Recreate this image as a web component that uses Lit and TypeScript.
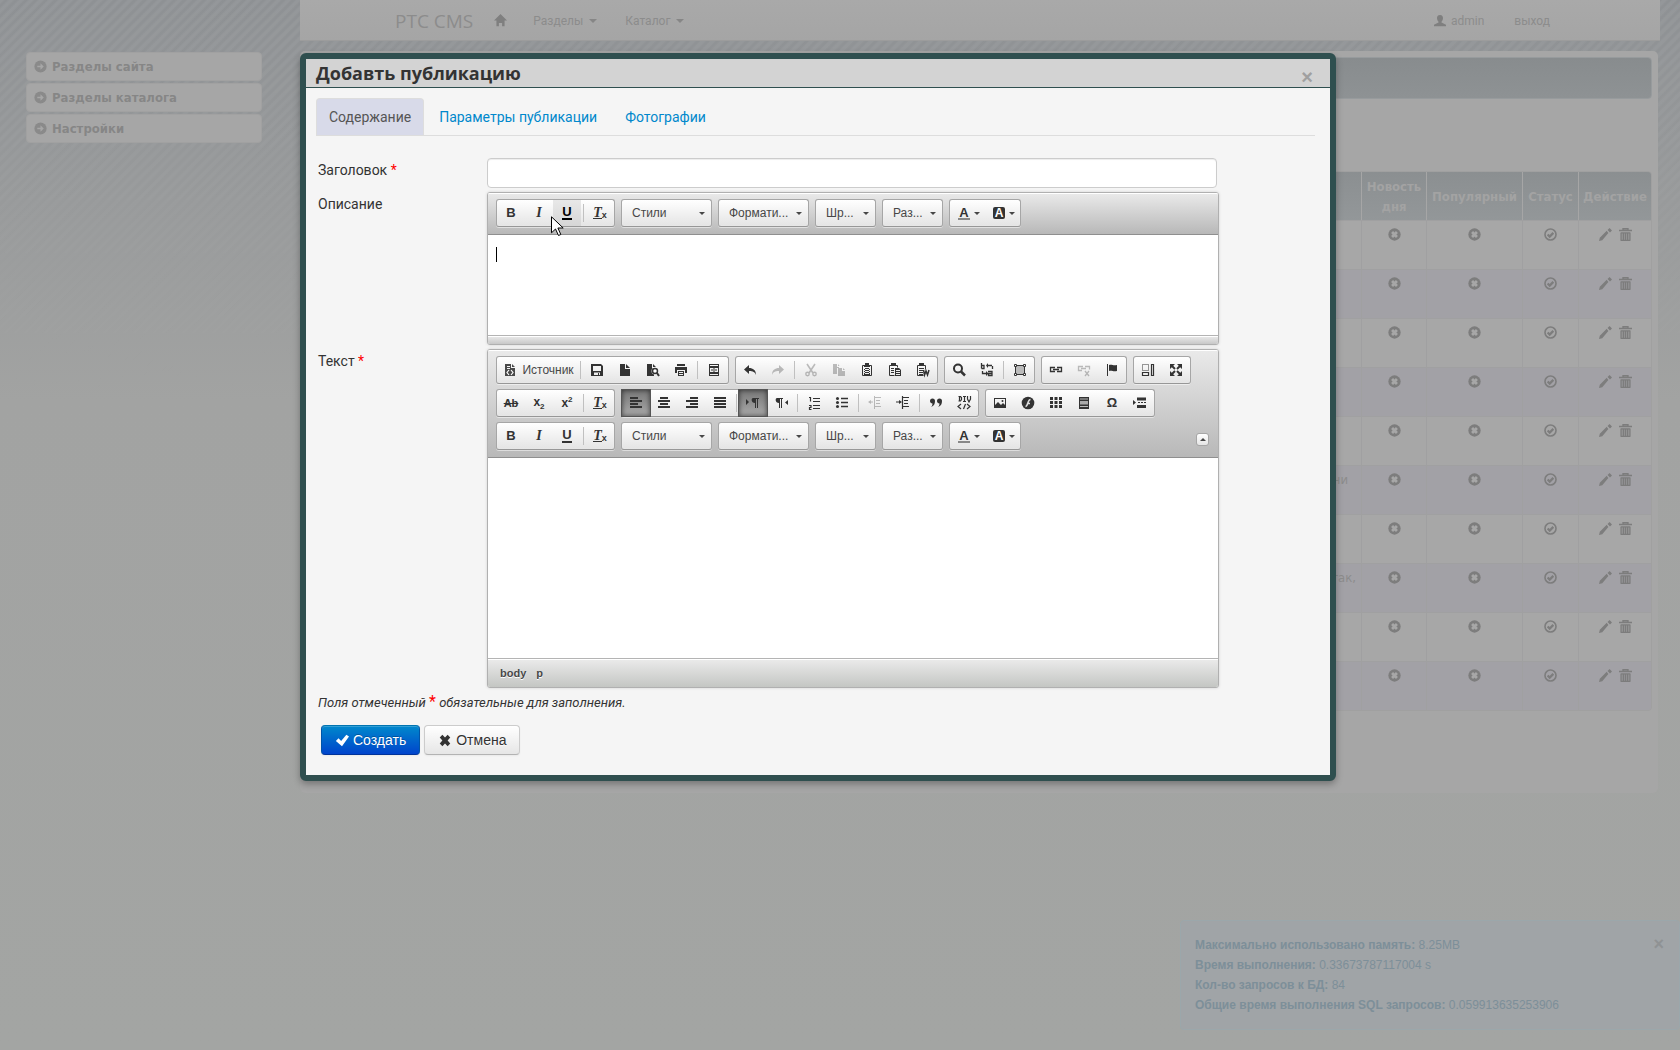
import { LitElement, html, svg, css, nothing, TemplateResult, SVGTemplateResult } from "lit";
import { customElement, property } from "lit/decorators.js";

/* ---------- icon drawings, 16 x 16 grid ---------- */
const lines = (d: string, w = 1) => svg`<path d=${d} fill="none" stroke="currentColor" stroke-width=${w} />`;
const solid = (d: string) => svg`<path d=${d} fill="currentColor" fill-rule="evenodd" />`;

const ICONS: Record<string, SVGTemplateResult> = {
  source: svg`${solid("M3 2h6v4h4v8H3zM10 2l3 3h-3zM5 4h3v1H5zM5 6h3v1H5z")}<path d="M7 8 5 10.500 7 13M9 8l2 2.500L9 13" fill="none" stroke="#fff" stroke-width="1.200" />`,
  save: solid("M2 2h10l2 2v10H2zM4 4v5h8V4zM5 10.500V13h6v-2.500zM9 11h1v2H9z"),
  newpage: solid("M3 2h5v5h5v7H3zM9 2l4 4H9z"),
  preview: svg`${solid("M2 2h5v4h2v8H2zM8 2l3 3H8z")}<circle cx="10" cy="9" r="3.500" fill="#fff" /><circle cx="10" cy="9" r="2.500" fill="none" stroke="currentColor" stroke-width="1.500" />${lines("M12 11l2 3", 2)}`,
  print: solid("M4 2h8v2H4zM2 5h12v6h-2V8H4v3H2zM5 9h6v5H5zM6 10v1h4v-1zM6 12v1h4v-1z"),
  templates: solid("M3 2h10v12H3zM4 3v1h8V3zM4 6v4h3.500V6zM8.500 6v4H12V6zM4 12v1h8v-1zM5 7.500h2v1H5zM9 7.500h2v1H9z"),
  undo: solid("M7 3v3c4 0 7 2 7 7-1-3-3-4-7-4v3L2 7.500z"),
  redo: solid("M9 3v3c-4 0-7 2-7 7 1-3 3-4 7-4v3l5-4.500z"),
  cut: svg`${lines("M4 2l6 9M12 2 6 11", 1.6)}<circle cx="4.500" cy="12" r="1.700" fill="none" stroke="currentColor" stroke-width="1.400" /><circle cx="11.500" cy="12" r="1.700" fill="none" stroke="currentColor" stroke-width="1.400" />`,
  copy: solid("M2 2h4v3h2v1H6v6H2zM7 2l1.500 2H7zM7 6h4v3h3v5H7zM12 6l2 2h-2z"),
  paste: svg`${lines("M3.500 3.500h9v10h-9z")}${solid("M6 1h4v2h1v2H5V3h1zM5 6h6v1H5zM5 8h6v1H5zM5 10h6v1H5zM5 12h6v1H5zM5 6h1v6H5zM10 6h1v6h-1z")}`,
  pastetext: svg`${lines("M2.500 3.500h8M2.500 3.500v10h5M10.500 3.500v2")}${solid("M4 1h5v3H4zM4 6h3v1H4zM4 8h3v1H4zM4 10h3v1H4zM8 6h4l2 2v6H8zM9 8v1h4V8zM9 10v1h4v-1zM9 12v1h4v-1z")}`,
  pasteword: svg`${lines("M2.500 3.500h8M2.500 3.500v10h6M10.500 3.500v4")}${solid("M4 1h5v3H4zM4 6h5v1H4zM4 8h4v1H4zM4 10h4v1H4zM4 12h4v1H4z")}${lines("M8.500 8l1 5 1.500-4 1.500 4L14 8", 1.5)}`,
  find: svg`<circle cx="7" cy="6.500" r="4" fill="none" stroke="currentColor" stroke-width="2" />${lines("M10 9.500l4 4", 2.5)}`,
  replace: svg`${lines("M2.500 1v5.500M2.500 3.500h2.500v3h-2.500M9 9.500h4v4h-3.500v-2H13M8 3.500h5M13.500 4v3M3.500 9v2.500h4", 1.3)}${solid("M9 1 7 3.500 9 6zM7 9l2.500 2.500L7 14z")}`,
  selectall: svg`<rect x="4" y="4" width="8" height="8" fill="#bbb" />${lines("M3.500 3.500h9v9h-9z")}<path d="M2.500 2.500h2v2h-2zM11.500 2.500h2v2h-2zM2.500 11.500h2v2h-2zM11.500 11.500h2v2h-2z" fill="#fff" stroke="currentColor" />`,
  link: lines("M7 5.500H2.500v4H7M9 5.500h4.500v4H9M5 7.500h6", 1.3),
  unlink: svg`${lines("M7 4.500H2.500v4H6M9 4.500h4.500v3M5 6.500h5", 1.3)}${lines("M9 9l4 5M13 9l-4 5", 1.3)}`,
  anchor: solid("M3 2h1v12H3zM5 3c3-1 4 1 8 0v6c-4 1-5-1-8 0z"),
  blocks: svg`<path d="M2.500 2.500h6v6h-6z" fill="none" stroke="currentColor" stroke-dasharray="1 1" />${lines("M2.500 10.500h6v3h-6zM11.500 2.500h2v11h-2z", 1.2)}`,
  maximize: svg`${solid("M2 2h5L2 7zM14 2v5L9 2zM2 14V9l5 5zM14 14H9l5-5z")}${lines("M3 3l4 4M13 3 9 7M3 13l4-4M13 13 9 9", 2)}`,
  left: lines("M2 3h8M2 6h12M2 9h8M2 12h12", 1.8),
  center: lines("M4 3h8M2 6h12M4 9h8M2 12h12", 1.8),
  right: lines("M6 3h8M2 6h12M6 9h8M2 12h12", 1.8),
  justify: lines("M2 3h12M2 6h12M2 9h12M2 12h12", 1.8),
  ltr: solid("M1 4l3 3-3 3zM8 3h6v1h-1v9h-1V4h-1v9h-1V8c-4 0-4-5-2-5z"),
  rtl: solid("M15 5l-3 2.500 3 2.500zM4 3h6v1H9v9H8V4H7v9H6V8C2 8 2 3 4 3z"),
  ol: lines("M7 3.500h7M7 6.500h7M7 10.500h7M7 13.500h7M3 2.500h1.500v4M3 10.500h2v2H3.500v2h2", 1.2),
  ul: svg`${lines("M7 3.500h7M7 7.500h7M7 11.500h7", 1.5)}<circle cx="3.500" cy="3.500" r="1.500" /><circle cx="3.500" cy="7.500" r="1.500" /><circle cx="3.500" cy="11.500" r="1.500" />`,
  outdent: svg`${lines("M7 2.500h7M9 5.500h4M9 8.500h4M7 11.500h7M2 7h4M7.500 1v13")}${solid("M1 7l3-2v4z")}`,
  indent: svg`${lines("M7 2.500h7M9 5.500h4M9 8.500h4M7 11.500h7M1 7h4M7.500 1v13", 1.2)}${solid("M7 7 4 5v4z")}`,
  quote: solid("M2 6a2.500 2.500 0 1 1 5 0c0 3-1 5-4 6 1-1 1.500-2 1.500-3.500C3 8.500 2 7.500 2 6zM9 6a2.500 2.500 0 1 1 5 0c0 3-1 5-4 6 1-1 1.500-2 1.500-3.500C10 8.500 9 7.500 9 6z"),
  div: lines("M3.500 1v5M2.500 1.500h2l1 1v2l-1 1.500h-2M8.500 1v6M7 1.500h3M7 6.500h3M11.500 1v3l1.500 3 1.500-3V1M5 9l-3 2.500L5 14M11 9l3 2.500L11 14M9.500 9l-2 5", 1.2),
  image: solid("M2 3h12v10H2zM3 4v6l3-3 3 3 2-2 2 2V4zM10.500 5a1 1 0 1 1 0 2 1 1 0 0 1 0-2z"),
  flash: svg`<circle cx="8" cy="8" r="6.300" /><path d="M10.500 4.500c-3 0-2.500 7-5 7M7 8.500h3" fill="none" stroke="#ddd" stroke-width="1.600" />`,
  table: lines("M2 3.500h3M6.500 3.500h3M11 3.500h3M2 7.500h3M6.500 7.500h3M11 7.500h3M2 11.500h3M6.500 11.500h3M11 11.500h3", 3),
  rule: svg`<path d="M3 2h10v12H3z" /><path d="M4 4h8M4 11.500h8" stroke="#bbb" stroke-width="1" /><path d="M4 6h8v3.500H4z" fill="#aaa" />`,
  pagebreak: svg`${lines("M5 4h9M5 11.500h9", 3)}${lines("M6 7.500h2M9 7.500h2M12 7.500h2")}${solid("M1 5l3 2.500L1 10z")}`,
  tri: svg`<path d="M0 0h6L3 3z" fill="currentColor" />`,
  arrow: svg`<circle cx="8" cy="8" r="7.500" /><path d="M4 7H8V4l4 4-4 4V9H4z" fill="#a7a7a7" />`,
  home: solid("M8 0l8 8h-3v7h-3v-4H6v4H3V8H0z"),
  user: solid("M8 0c3 0 4 2 4 4 0 2-1 4-2 5v1l6 3v2H0v-2l6-3V9C5 8 4 6 4 4c0-2 1-4 4-4z"),
  remove: svg`<circle cx="8" cy="8" r="7.600" /><path d="M5 5l6 6M11 5l-6 6" fill="none" stroke="#a7a7a7" stroke-width="3.400" />`,
  ok: svg`<circle cx="8" cy="8" r="6.800" fill="none" stroke="currentColor" stroke-width="2" />${lines("M4.500 8l2.500 2.500 4.500-4.500", 2.8)}`,
  pencil: solid("M0 16l1-4 8.500-8.500 2 2.500L4 15zM10.500 2.500 13 0l3 3-2.500 2.500z"),
  trash: svg`${lines("M0 3h16M5 3V.8h6V3", 1.8)}${lines("M2.500 6v9.500M5.500 6v9M8 6v9M10.500 6v9M13.500 6v9.500M2 15.200h12M2 6h12", 1.3)}<path d="M2 6h12v9H2z" opacity=".45" />`,
  check: solid("M1 9l3-3 3 3 6-7 3 2-8 11z"),
  cross: solid("M2 5l3-3 3 3 3-3 3 3-3 3.500 3 3.500-3 3-3-3-3 3-3-3 3-3.500z"),
};

const icon = (name: string, size = 16) =>
  html`<svg class="ico" width=${size} height=${size} viewBox="0 0 16 16" fill="currentColor" aria-hidden="true">${ICONS[name]}</svg>`;

const caret = html`<svg class="tri" width="6" height="3" viewBox="0 0 6 3" aria-hidden="true">${ICONS.tri}</svg>`;

/* ---------- rich text editor ---------- */
type Tool = string | { text?: TemplateResult; id: string; label?: string; state?: string; menu?: boolean; select?: string };

const BOLD: Tool = { id: "b", text: html`<b class="g">B</b>` };
const ITALIC: Tool = { id: "i", text: html`<i class="g it">I</i>` };
const CLEAR: Tool = { id: "clear", text: html`<span class="clear"><i class="g tx">T</i><b class="g xs">x</b></span>` };
const under = (state?: string): Tool => ({ id: "u", text: html`<b class="g un">U</b>`, state });

const COMBOS: Tool[][] = [
  [{ id: "styles", select: "Стили" }],
  [{ id: "format", select: "Формати..." }],
  [{ id: "font", select: "Шр..." }],
  [{ id: "size", select: "Раз..." }],
  [
    { id: "color", text: html`<b class="g fc">A</b>`, menu: true },
    { id: "bg", text: html`<b class="g bc">A</b>`, menu: true },
  ],
];

const FULL: Tool[][][] = [
  [
    [{ id: "source", label: "Источник" }, "|", "save", "newpage", "preview", "print", "|", "templates"],
    ["undo", { id: "redo", state: "off" }, "|", { id: "cut", state: "off" }, { id: "copy", state: "off" }, "paste", "pastetext", "pasteword"],
    ["find", "replace", "|", "selectall"],
    ["link", { id: "unlink", state: "off" }, "anchor"],
    ["blocks", "maximize"],
  ],
  [
    [
      { id: "strike", text: html`<s class="g sm">Ab</s>` },
      { id: "sub", text: html`<b class="g sm">x<sub>2</sub></b>` },
      { id: "sup", text: html`<b class="g sm">x<sup>2</sup></b>` },
      "|",
      CLEAR,
    ],
    [{ id: "left", state: "on" }, "center", "right", "justify", "|", { id: "ltr", state: "on" }, "rtl", "|", "ol", "ul", "|", { id: "outdent", state: "off" }, "indent", "|", "quote", "div"],
    ["image", "flash", "table", "rule", { id: "omega", text: html`<b class="g">Ω</b>` }, "pagebreak"],
  ],
  [[BOLD, ITALIC, under(), "|", CLEAR], ...COMBOS],
];
const SHORT: Tool[][][] = [[[BOLD, ITALIC, under("hover"), "|", CLEAR], ...COMBOS]];

@customElement("rich-editor")
export class RichEditor extends LitElement {
  @property({ type: Boolean }) full = false;
  @property() label = "";

  static styles = css`
    :host { display: block; font: 12px/16px "Liberation Sans", sans-serif; color: #333; }
    .box { border: 1px solid #b0b0b0; border-radius: 3px; box-shadow: 0 0 3px rgba(0, 0, 0, 0.15); background: #fff; overflow: hidden; }
    .top { position: relative; padding: 6px 8px 7px; border-bottom: 1px solid #8f8f8f; background: linear-gradient(#eaeaea, #b8b8b8); box-shadow: inset 0 1px 0 #fff; }
    .row { display: flex; gap: 6px; margin-bottom: 5px; }
    .row:last-of-type { margin-bottom: 0; }
    .group { display: flex; height: 26px; border: 1px solid #a6a6a6; border-bottom-color: #979797; border-radius: 3px; background: linear-gradient(#fff, #e4e4e4); box-shadow: 0 1px 0 rgba(255, 255, 255, 0.5), inset 0 0 1px #fff; }
    button { display: flex; align-items: center; justify-content: center; width: 28px; margin: 0; padding: 0; border: 0; background: none; color: #333; font: inherit; }
    button.labelled { width: 81px; gap: 4px; padding: 0 5px 0 6px; color: #484848; white-space: nowrap; }
    button.menu { width: 35px; gap: 4px; padding-left: 3px; }
    button.off .ico { opacity: 0.3; }
    button.on { background: linear-gradient(#777, #aaa); box-shadow: inset 0 0 5px rgba(0, 0, 0, 0.6), 0 0 0 1px #555; }
    button.hover { background: linear-gradient(#e8e8e8, #d6d6d6); color: #000; }
    .sep { width: 1px; height: 18px; margin: 4px 2px; background: #c0c0c0; }
    .ico { display: block; flex: none; }
    .tri { display: block; flex: none; color: #474747; }
    .g { display: block; font: bold 13px/16px "Liberation Sans", sans-serif; }
    .it { font: italic bold 14px/16px "Liberation Serif", serif; }
    .un { line-height: 12px; border-bottom: 2px solid; }
    .clear { display: flex; align-items: flex-end; }
    .tx { font: italic bold 14px/11px "Liberation Serif", serif; border-bottom: 1px solid; }
    .xs { font-size: 9px; line-height: 8px; }
    .sm { font-size: 12px; }
    .sm sub, .sm sup { font-size: 8px; line-height: 8px; }
    s.sm { font-size: 11px; }
    .fc { line-height: 11px; border-bottom: 2px solid #888; padding: 0 1px; }
    .bc { padding: 0 2px; border-radius: 2px; background: #333; color: #fff; line-height: 12px; font-size: 12px; }
    .combo { display: grid; align-items: center; }
    .combo > * { grid-area: 1 / 1; }
    .combo .tri { justify-self: end; margin-right: 6px; pointer-events: none; }
    select { appearance: none; width: 89px; height: 26px; margin: 0; padding: 0 16px 0 10px; border: 0; background: none; color: #474747; font: inherit; }
    select.slim { width: 59px; }
    .collapse { position: absolute; right: 9px; bottom: 11px; width: 13px; height: 13px; border: 1px solid #a6a6a6; border-radius: 3px; background: linear-gradient(#fff, #e4e4e4); }
    .collapse .tri { transform: rotate(180deg); }
    .body { position: relative; }
    textarea { display: block; box-sizing: border-box; width: 100%; height: 100px; padding: 12px 8px; border: 0; outline: 0; resize: none; background: #fff; font: 13px/16px "Liberation Sans", sans-serif; }
    textarea.full { height: 200px; }
    .bar { position: absolute; left: 8px; top: 12px; width: 1px; height: 15px; background: #000; }
    .foot { height: 8px; border-top: 1px solid #b4b4b4; background: linear-gradient(#ebebeb, #c8c8c8); box-shadow: inset 0 1px 0 #fff; }
    .foot.full { display: flex; gap: 10px; align-items: center; height: 28px; padding: 0 12px; font-weight: bold; font-size: 11px; color: #484848; text-shadow: 0 1px 0 #fff; background: linear-gradient(#ebebeb, #c4c6c3); }
    .foot a { color: inherit; text-decoration: none; }
  `;

  private tool(t: Tool) {
    if (t === "|") return html`<span class="sep"></span>`;
    if (typeof t === "string") return html`<button type="button" aria-label=${t}>${icon(t)}</button>`;
    if (t.select)
      return html`<span class="combo"><select class=${t.select.length > 6 || t.id === "styles" ? "" : "slim"} aria-label=${t.id}><option>${t.select}</option></select>${caret}</span>`;
    return html`<button type="button" aria-label=${t.id} class="${t.state ?? ""} ${t.menu ? "menu" : ""} ${t.label ? "labelled" : ""}">
      ${t.text ?? icon(t.id)}${t.label ?? nothing}${t.menu ? caret : nothing}
    </button>`;
  }

  render() {
    const rows = this.full ? FULL : SHORT;
    const f = this.full ? "full" : "";
    return html`<div class="box">
      <div class="top ${f}">
        ${rows.map((r) => html`<div class="row">${r.map((g) => html`<div class="group">${g.map((t) => this.tool(t))}</div>`)}</div>`)}
        ${this.full ? html`<button type="button" class="collapse" aria-label="collapse">${caret}</button>` : nothing}
      </div>
      <div class="body">
        <textarea class=${f} aria-label=${this.label}></textarea>
        ${this.full ? nothing : html`<span class="bar"></span>`}
      </div>
      <div class="foot ${f}">${this.full ? html`<a href="#">body</a><a href="#">p</a>` : nothing}</div>
    </div>`;
  }
}

/* ---------- page ---------- */
const TAILS = ["", "", "", "", "", "ни", "", "так,", "", ""];

@customElement("app-root")
export class AppRoot extends LitElement {
  static styles = css`
    :host { display: block; position: relative; min-height: 100vh; overflow: hidden; background: linear-gradient(#8e9194, #a2a3a2 400px, #a3a5a3); font: 14px/20px Roboto, "Open Sans", sans-serif; color: #333; }
    .stripes { position: absolute; inset: 0 0 auto; height: 400px; background: repeating-linear-gradient(135deg, rgba(255, 255, 255, 0.06) 0 2px, transparent 4px 5px, rgba(255, 255, 255, 0.06) 7px); mask-image: linear-gradient(#000, transparent); }
    .ico { display: block; flex: none; }
    a { color: inherit; text-decoration: none; }
    .page { position: relative; display: grid; grid-template-columns: 236px minmax(0, 1fr); column-gap: 38px; padding: 0 20px 0 26px; color: #8c8c8c; }
    .side { display: flex; flex-direction: column; gap: 2px; padding-top: 52px; font: bold 13px/20px "DejaVu Sans Condensed", "DejaVu Sans", sans-serif; }
    .side a { display: flex; align-items: center; gap: 5px; height: 27px; padding: 0 7px; border: 1px solid #a1a1a1; border-radius: 4px; background: #a6a6a6; color: #868686; }
    .side .ico { color: #8a8a8a; }
    .nav { display: flex; align-items: center; box-sizing: border-box; height: 41px; padding: 1px 110px 0 95px; border-bottom: 1px solid #9c9c9c; background: linear-gradient(#a9a9a9, #a5a5a5); font-size: 12px; }
    .nav a { display: flex; align-items: center; gap: 5px; }
    .nav .brand { font: 19px/20px "Open Sans", "Noto Sans", sans-serif; margin-right: 21px; }
    .nav .ico { color: #7f7f7f; }
    .nav .home { margin-right: 26px; }
    .nav .drop { gap: 6px; margin-right: 28px; }
    .drop::after { content: ""; border: 4px solid transparent; border-top-color: #868686; border-bottom: 0; }
    .user { margin-left: auto; margin-right: 30px; }
    .panel { margin: 10px 2px 0 0; padding: 6px 6px 82px; border-radius: 5px; background: #a6a6a6; }
    .title { box-sizing: border-box; height: 42px; margin-bottom: 72px; border: 1px solid #979b9d; border-radius: 4px; background: linear-gradient(#888c8e, #8e9294); }
    table { width: 100%; border-collapse: separate; border-spacing: 0; border: 1px solid #a0a0a0; border-radius: 4px; overflow: hidden; font: 13px/14px "DejaVu Sans Condensed", "DejaVu Sans", sans-serif; }
    th { box-sizing: border-box; height: 48px; padding: 1px 4px 0; border-left: 1px solid #a6a6a6; background: linear-gradient(#8b8f91, #939799); color: #a3a3a3; font-weight: bold; line-height: 20px; }
    td { box-sizing: border-box; height: 49px; padding: 7px 5px; border-left: 1px solid #a0a0a1; border-top: 1px solid #a0a0a1; background: #a7a7a7; vertical-align: top; text-align: center; }
    td:first-child, th:first-child { border-left: 0; }
    tr:nth-child(even) td { background: #a2a1a6; }
    td .ico { margin: 0 auto; color: #7d7d7d; }
    td.tail { text-align: right; }
    td.tail.short { padding-right: 13px; }
    .acts { display: flex; justify-content: center; gap: 7px; }
    .acts .ico { margin: 0; }
    .c1 { width: 65px; } .c2 { width: 96px; } .c3 { width: 56px; } .c4 { width: 73px; }
    .toast { position: absolute; right: 0; bottom: 20px; display: flex; justify-content: space-between; box-sizing: border-box; width: 500px; height: 110px; padding: 14px 15px 14px 14px; border: 1px solid #9ba7ab; border-radius: 4px; background: #a0a4a7; color: #7d8f99; font: 12px/20px "Liberation Sans", sans-serif; }
    .toast p { margin: 0; }
    .x { padding: 0; border: 0; background: none; font: bold 20px/20px "Liberation Sans", sans-serif; }
    .toast .x { height: 18px; color: #8f9294; font-size: 18px; line-height: 18px; }
    .modal { position: absolute; left: 300px; right: 344px; top: 53px; border: 6px solid #2f4f4f; border-radius: 6px; background: #f5f5f5; box-shadow: 0 3px 7px rgba(0, 0, 0, 0.3); }
    .mhead { display: flex; justify-content: space-between; align-items: flex-end; height: 28px; padding: 0 17px 0 10px; border-bottom: 1px solid #2f4f4f; background: #d3d3d3; }
    h3 { margin: 0; font: bold 18px/28px "Open Sans", "Noto Sans", sans-serif; }
    .mhead .x { color: #a0a0a0; }
    .tabs { display: flex; gap: 2px; margin: 10px 15px 0 10px; border-bottom: 1px solid #ddd; }
    .tabs a { padding: 8px 12px; color: #08c; border: 1px solid transparent; border-bottom: 0; border-radius: 4px 4px 0 0; }
    .tabs a.cur { border-color: #ddd; background: #d8dae9; color: #555; }
    form { padding: 22px 111px 20px 12px; }
    .field { display: grid; grid-template-columns: 169px minmax(0, 1fr); margin-bottom: 4px; }
    .field label { padding-top: 2px; }
    em { color: red; font-style: normal; }
    input { box-sizing: border-box; width: calc(100% - 2px); height: 30px; padding: 4px 6px; border: 1px solid #ccc; border-radius: 4px; background: #fff; box-shadow: inset 0 1px 1px rgba(0, 0, 0, 0.075); font: inherit; }
    .note { margin: 5px 0 12px; font-style: italic; font-size: 13px; line-height: 20px; }
    .note em { font-size: 16px; line-height: 16px; }
    .btns { display: flex; gap: 4px; padding-left: 3px; }
    .btn { display: flex; align-items: center; gap: 4px; box-sizing: border-box; height: 30px; padding: 0 13px; border: 1px solid #bbb; border-color: #ccc #ccc #b3b3b3; border-radius: 4px; background: linear-gradient(#fff, #e6e6e6); box-shadow: inset 0 1px 0 rgba(255, 255, 255, 0.2), 0 1px 2px rgba(0, 0, 0, 0.05); color: #333; font: 14px/20px "Liberation Sans", sans-serif; text-shadow: 0 1px 1px rgba(255, 255, 255, 0.75); }
    .btn.primary { border-color: #0074b0 #0055a8 #003399; background: linear-gradient(#08c, #04c); color: #fff; text-shadow: 0 -1px 0 rgba(0, 0, 0, 0.25); }
    .mouse { position: absolute; left: 245px; top: 157px; }
  `;

  render() {
    return html`
      <div class="stripes"></div>
      <div class="page">
        <nav class="side">
          ${["Разделы сайта", "Разделы каталога", "Настройки"].map((t) => html`<a href="#">${icon("arrow", 13)}${t}</a>`)}
        </nav>
        <main>
          <nav class="nav">
            <a class="brand" href="#">PTC CMS</a>
            <a class="home" href="#" aria-label="home">${icon("home", 13)}</a>
            <a class="drop" href="#">Разделы</a>
            <a class="drop" href="#">Каталог</a>
            <a class="user" href="#">${icon("user", 12)}admin</a>
            <a href="#">выход</a>
          </nav>
          <section class="panel">
            <div class="title"></div>
            <table>
              <thead>
                <tr><th></th><th class="c1">Новость дня</th><th class="c2">Популярный</th><th class="c3">Статус</th><th class="c4">Действие</th></tr>
              </thead>
              <tbody>
                ${TAILS.map(
                  (t) => html`<tr>
                    <td class="tail ${t.length === 2 ? "short" : ""}">${t}</td>
                    <td>${icon("remove", 13)}</td>
                    <td>${icon("remove", 13)}</td>
                    <td>${icon("ok", 13)}</td>
                    <td><div class="acts">${icon("pencil", 13)}${icon("trash", 13)}</div></td>
                  </tr>`
                )}
              </tbody>
            </table>
          </section>
        </main>
      </div>
      <aside class="toast">
        <div>
          <p><b>Максимально использовано память:</b> 8.25MB</p>
          <p><b>Время выполнения:</b> 0.33673787117004 s</p>
          <p><b>Кол-во запросов к БД:</b> 84</p>
          <p><b>Общие время выполнения SQL запросов:</b> 0.059913635253906</p>
        </div>
        <button class="x" type="button">×</button>
      </aside>
      <section class="modal" role="dialog">
        <header class="mhead">
          <h3>Добавть публикацию</h3>
          <button class="x" type="button">×</button>
        </header>
        <nav class="tabs">
          <a class="cur" href="#">Содержание</a>
          <a href="#">Параметры публикации</a>
          <a href="#">Фотографии</a>
        </nav>
        <form>
          <div class="field"><label for="title">Заголовок <em>*</em></label><input id="title" type="text" /></div>
          <div class="field"><label for="descr">Описание</label><rich-editor id="descr" label="Описание"></rich-editor></div>
          <div class="field"><label for="text">Текст <em>*</em></label><rich-editor id="text" full label="Текст"></rich-editor></div>
          <p class="note">Поля отмеченный <em>*</em> обязательные для заполнения.</p>
          <div class="btns">
            <button type="button" class="btn primary">${icon("check", 14)}Создать</button>
            <button type="button" class="btn">${icon("cross", 14)}Отмена</button>
          </div>
        </form>
        <svg class="mouse" width="13" height="21" viewBox="0 0 13 21" aria-hidden="true">
          <path d="M.5.800v16l4-3.800 3 6.500 2.300-1-2.900-6.500h5.300z" fill="#fff" stroke="#000" />
        </svg>
      </section>
    `;
  }
}
